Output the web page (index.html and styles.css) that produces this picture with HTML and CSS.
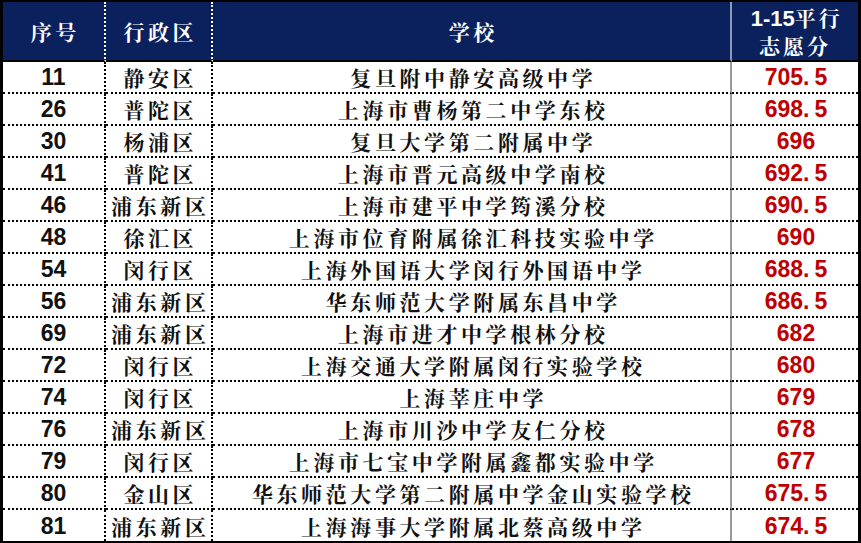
FILE: index.html
```html
<!DOCTYPE html>
<html lang="zh">
<head>
<meta charset="utf-8">
<link rel="stylesheet" href="styles.css">
</head>
<body>
<table class="rank">
  <colgroup>
    <col class="c-no"><col class="c-dist"><col class="c-school"><col class="c-score">
  </colgroup>
  <thead>
    <tr>
      <th class="cjk">序号</th>
      <th class="cjk">行政区</th>
      <th class="cjk">学校</th>
      <th class="cjk hscore"><span class="hnum">1-15</span>平行<br>志愿分</th>
    </tr>
  </thead>
  <tbody>
    <tr><td class="num">11</td><td class="cjk">静安区</td><td class="cjk">复旦附中静安高级中学</td><td class="num red">705<span class="dot">.</span>5</td></tr>
    <tr><td class="num">26</td><td class="cjk">普陀区</td><td class="cjk">上海市曹杨第二中学东校</td><td class="num red">698<span class="dot">.</span>5</td></tr>
    <tr><td class="num">30</td><td class="cjk">杨浦区</td><td class="cjk">复旦大学第二附属中学</td><td class="num red">696</td></tr>
    <tr><td class="num">41</td><td class="cjk">普陀区</td><td class="cjk">上海市晋元高级中学南校</td><td class="num red">692<span class="dot">.</span>5</td></tr>
    <tr><td class="num">46</td><td class="cjk">浦东新区</td><td class="cjk">上海市建平中学筠溪分校</td><td class="num red">690<span class="dot">.</span>5</td></tr>
    <tr><td class="num">48</td><td class="cjk">徐汇区</td><td class="cjk">上海市位育附属徐汇科技实验中学</td><td class="num red">690</td></tr>
    <tr><td class="num">54</td><td class="cjk">闵行区</td><td class="cjk">上海外国语大学闵行外国语中学</td><td class="num red">688<span class="dot">.</span>5</td></tr>
    <tr><td class="num">56</td><td class="cjk">浦东新区</td><td class="cjk">华东师范大学附属东昌中学</td><td class="num red">686<span class="dot">.</span>5</td></tr>
    <tr><td class="num">69</td><td class="cjk">浦东新区</td><td class="cjk">上海市进才中学根林分校</td><td class="num red">682</td></tr>
    <tr><td class="num">72</td><td class="cjk">闵行区</td><td class="cjk">上海交通大学附属闵行实验学校</td><td class="num red">680</td></tr>
    <tr><td class="num">74</td><td class="cjk">闵行区</td><td class="cjk">上海莘庄中学</td><td class="num red">679</td></tr>
    <tr><td class="num">76</td><td class="cjk">浦东新区</td><td class="cjk">上海市川沙中学友仁分校</td><td class="num red">678</td></tr>
    <tr><td class="num">79</td><td class="cjk">闵行区</td><td class="cjk">上海市七宝中学附属鑫都实验中学</td><td class="num red">677</td></tr>
    <tr><td class="num">80</td><td class="cjk">金山区</td><td class="cjk">华东师范大学第二附属中学金山实验学校</td><td class="num red">675<span class="dot">.</span>5</td></tr>
    <tr class="last"><td class="num">81</td><td class="cjk">浦东新区</td><td class="cjk">上海海事大学附属北蔡高级中学</td><td class="num red">674<span class="dot">.</span>5</td></tr>
  </tbody>
</table>
</body>
</html>
```
FILE: styles.css
```css
html, body {
  margin: 0;
  padding: 0;
  background: #ffffff;
}

.rank {
  width: 861px;
  table-layout: fixed;
  border-collapse: separate;
  border-spacing: 0;
  border: 3px solid #000;
  border-top-width: 2px;
  box-sizing: border-box;
}

.c-no { width: 103px; }
.c-dist { width: 107px; }
.c-school { width: 519px; }
.c-score { width: 126px; }

.rank th,
.rank td {
  padding: 0;
  text-align: center;
  vertical-align: middle;
  box-sizing: border-box;
  white-space: nowrap;
}

.rank thead th {
  height: 60px;
  background: #0b215e;
  color: #ffffff;
  border-bottom: 2px solid #000;
  border-right: 2px dotted #ffffff;
}

.rank thead th:nth-child(3) {
  border-right: 2px solid #8a9ab8;
}

.rank thead th:last-child {
  border-right: none;
}

.rank tbody td {
  height: 32px;
  border-bottom: 2px dotted #000;
  border-right: 2px dotted #000;
  color: #111;
}

.rank tbody td:nth-child(3) {
  border-right: 2px solid #9a9a9a;
}

.rank tbody td:last-child {
  border-right: none;
}

.rank tbody tr.last td {
  height: 31px;
  border-bottom: none;
}

.cjk {
  font-family: "Noto Serif CJK SC", "Noto Sans CJK SC", serif;
  font-weight: 700;
  font-size: 21px;
  letter-spacing: 3.6px;
  text-indent: 3.6px;
  line-height: 26px;
}

.num {
  font-family: "Liberation Sans", Arial, sans-serif;
  font-weight: 700;
  font-size: 23px;
  line-height: 26px;
  letter-spacing: 0;
}

.hscore {
  line-height: 27px;
  letter-spacing: 3px;
}

.hnum {
  font-family: "Liberation Sans", Arial, sans-serif;
  font-weight: 700;
  font-size: 22px;
  letter-spacing: 0;
}

.rank tbody td.red {
  color: #c00000;
  padding-left: 2px;
}

.dot {
  margin-right: 5px;
}
```
